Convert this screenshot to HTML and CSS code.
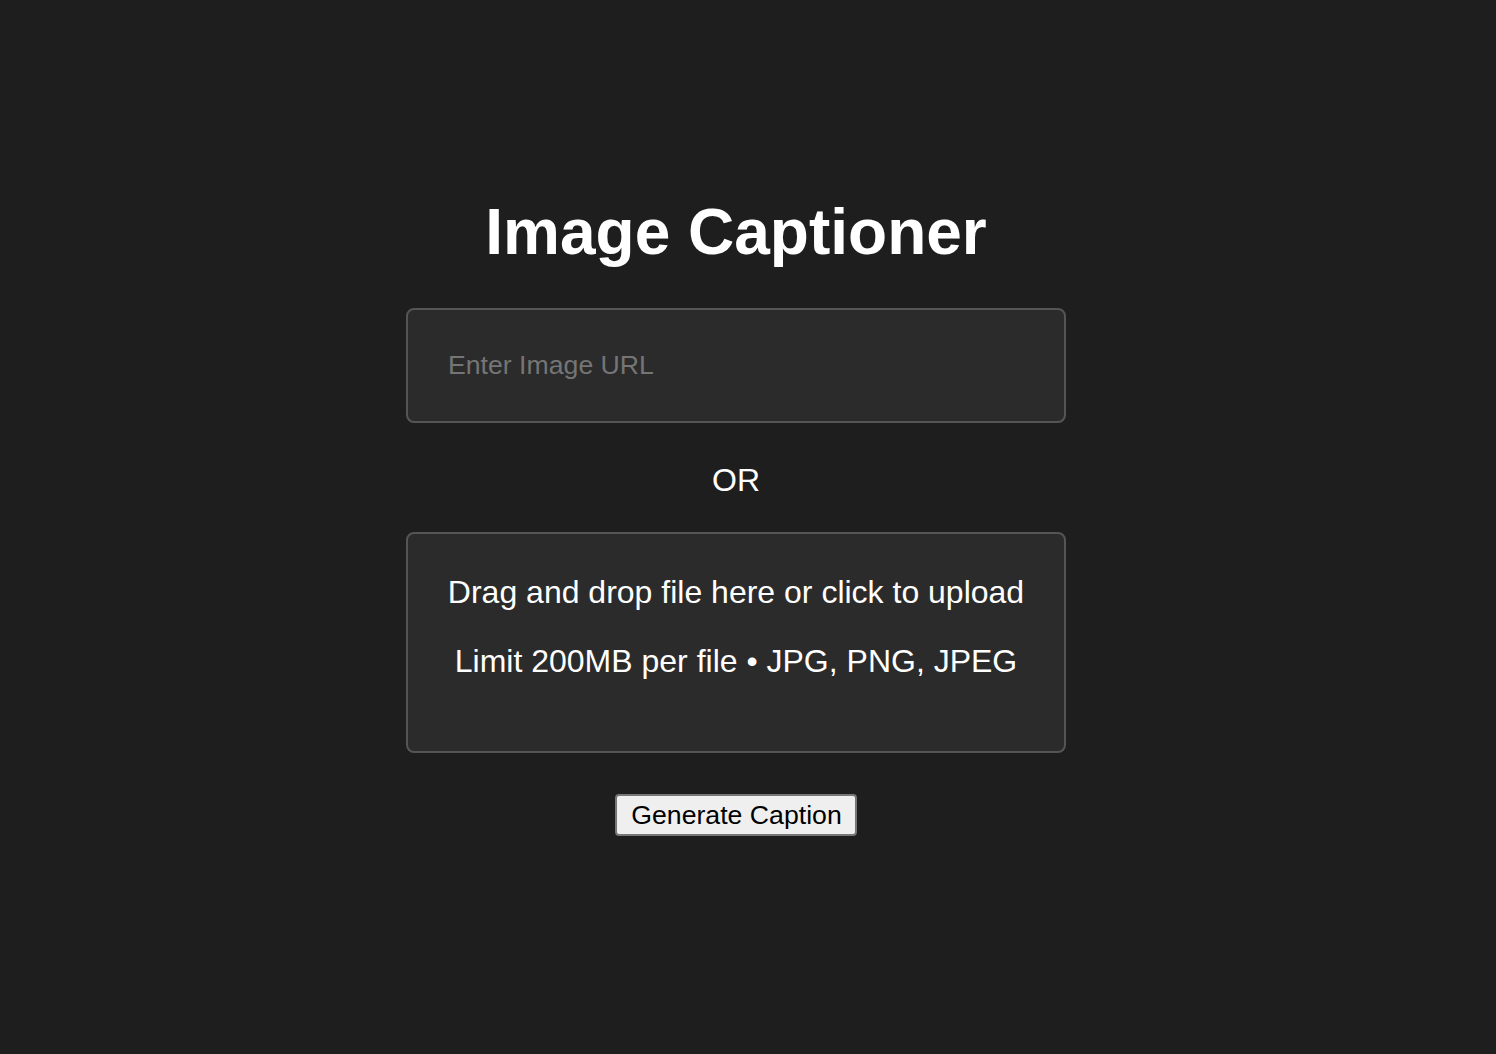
FILE: index.html
```
<!DOCTYPE html>
<html lang="en">
<head>
<meta charset="utf-8">
<title>Image Captioner</title>
<link rel="stylesheet" href="styles.css">
</head>
<body>
<main class="page">
  <h1 class="title">Image Captioner</h1>
  <input class="url-input" type="text" placeholder="Enter Image URL">
  <div class="or">OR</div>
  <div class="dropzone">
    <p class="drop-line">Drag and drop file here or click to upload</p>
    <p class="drop-line">Limit 200MB per file • JPG, PNG, JPEG</p>
  </div>
  <button class="generate" type="button">Generate Caption</button>
</main>
</body>
</html>
```
FILE: styles.css
```
html, body {
  margin: 0;
  padding: 0;
  background: #1e1e1e;
  height: 100%;
}
body {
  font-family: "Liberation Sans", Arial, sans-serif;
  color: #ffffff;
}
.page {
  display: flex;
  flex-direction: column;
  align-items: center;
  padding: 195px 24px 0 0;
}
.title {
  margin: 0;
  font-size: 64px;
  line-height: 74px;
  font-weight: 700;
  color: #ffffff;
}
.url-input {
  box-sizing: border-box;
  margin-top: 39px;
  width: 660px;
  height: 115px;
  padding: 0 40px;
  background: #2b2b2b;
  border: 2px solid #555555;
  border-radius: 8px;
  color: #ffffff;
  font-family: "Liberation Sans", Arial, sans-serif;
  font-size: 26.67px;
  outline: none;
}
.url-input::placeholder {
  color: #757575;
}
.or {
  margin-top: 39px;
  font-size: 32px;
  line-height: 37px;
}
.dropzone {
  box-sizing: border-box;
  margin-top: 33px;
  width: 660px;
  height: 221px;
  padding: 40px 20px 0;
  background: #2b2b2b;
  border: 2px solid #555555;
  border-radius: 8px;
  text-align: center;
}
.drop-line {
  margin: 0 0 32px;
  font-size: 32px;
  line-height: 37px;
  white-space: nowrap;
}
.generate {
  box-sizing: border-box;
  margin-top: 41px;
  height: 42px;
  padding: 0 13px 0 14px;
  background: #efefef;
  border: 2px solid #767676;
  border-radius: 4px;
  color: #000000;
  font-family: "Liberation Sans", Arial, sans-serif;
  font-size: 26.67px;
  line-height: 30px;
}
```
